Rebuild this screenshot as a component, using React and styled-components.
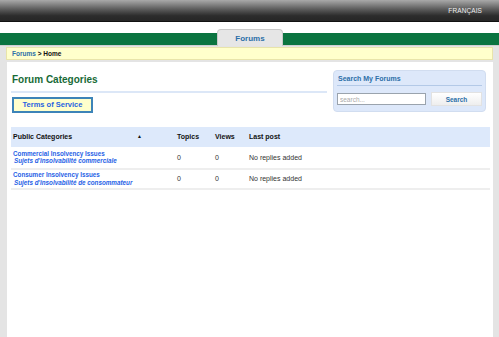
import React from "react";
import styled, { createGlobalStyle } from "styled-components";

const Global = createGlobalStyle`
  *, *::before, *::after {
    box-sizing: border-box;
  }
  html, body {
    margin: 0;
    padding: 0;
    background: #e4e4e4;
    font-family: "Liberation Sans", Arial, sans-serif;
  }
`;

const TopBar = styled.div`
  height: 22px;
  background: linear-gradient(#a9a9a9 0%, #5a5a5a 45%, #2c2c2c 75%, #262626 100%);
  border-bottom: 1px solid #111;
  display: flex;
  align-items: center;
  justify-content: flex-end;
  padding-right: 17px;
`;

const Lang = styled.a`
  color: #f0f0f0;
  font-size: 6.5px;
  letter-spacing: 0.1px;
`;

const Header = styled.div`
  background: #fff;
  padding-top: 11px;
`;

const NavBar = styled.div`
  height: 12px;
  background: #0a7440;
  display: flex;
  justify-content: center;
  align-items: flex-start;
`;

const Tab = styled.div`
  width: 66px;
  height: 17px;
  margin-top: -4px;
  margin-left: 1px;
  background: #e6e6e6;
  border: 1px solid #c9c9c9;
  border-bottom: none;
  border-radius: 4px 4px 0 0;
  color: #2c6fa8;
  font-size: 8px;
  font-weight: bold;
  display: flex;
  align-items: center;
  justify-content: center;
`;

const Main = styled.div`
  padding: 1px 6px 0 6px;
  border-top: 1px solid #d0d0d0;
`;

const Crumbs = styled.div`
  width: 487px;
  height: 13px;
  background: #ffffcc;
  border: 1px solid #e8e4aa;
  font-size: 6.5px;
  font-weight: bold;
  color: #111;
  display: flex;
  align-items: center;
  padding-left: 5px;
`;

const CrumbLink = styled.span`
  color: #2c6fa8;
`;

const Content = styled.div`
  background: #fff;
  margin: 2px 0 0 1px;
  width: 486px;
  height: 275px;
  padding: 8px 3px 0 4px;
`;

const TopRow = styled.div`
  display: flex;
  align-items: flex-start;
`;

const Left = styled.div`
  width: 316px;
  padding-top: 3px;
`;

const Title = styled.h1`
  margin: 1px 0 5px 1px;
  font-size: 10px;
  line-height: 12px;
  color: #186a36;
`;

const Rule = styled.div`
  height: 2px;
  background: #dce7f7;
`;

const TosButton = styled.button`
  margin: 1px 0 0 1px;
  width: 81px;
  height: 16px;
  background: #ffffcc;
  border: 2px solid #3d84b8;
  color: #1f63e0;
  font-family: inherit;
  font-size: 7.5px;
  font-weight: bold;
  padding: 0;
`;

const Sidebar = styled.div`
  width: 153px;
  margin-left: 6px;
  margin-top: 0;
  background: #dde8fa;
  border: 1px solid #d1ddf0;
  border-radius: 4px;
  padding: 3px 3px 5px 3px;
`;

const SideTitle = styled.div`
  font-size: 7px;
  font-weight: bold;
  color: #2c6fa8;
  line-height: 9px;
  padding: 0 0 2px 1px;
  border-bottom: 1px solid #b3c9e7;
`;

const SearchRow = styled.div`
  display: flex;
  align-items: center;
  margin-top: 6px;
  gap: 5px;
`;

const SearchInput = styled.input`
  width: 89px;
  height: 12px;
  border: 1px solid #9aa3ad;
  font-family: inherit;
  font-size: 6.5px;
  padding: 1px 2px;
  color: #888;
  &::placeholder {
    color: #aaa;
  }
`;

const SearchButton = styled.button`
  width: 52px;
  height: 14px;
  background: linear-gradient(#ffffff, #eeeeee);
  border: 1px solid #e2e2e2;
  color: #2c6fa8;
  font-family: inherit;
  font-size: 6.5px;
  font-weight: bold;
  padding: 0;
`;

const Table = styled.table`
  width: 479px;
  margin-top: 14px;
  border-collapse: collapse;
  font-size: 7px;
  color: #222;
`;

const Th = styled.th`
  background: #dde9fb;
  height: 20px;
  padding: 0 0 0 2px;
  text-align: left;
  font-weight: bold;
  color: #111;
  width: ${(p) => p.$w || "auto"};
`;

const Arrow = styled.span`
  float: right;
  margin-right: 33px;
  font-size: 5px;
`;

const Td = styled.td`
  height: ${(p) => p.$h || 20}px;
  padding: 0 0 0 2px;
  border-bottom: 2px solid #eeeeee;
  color: #333;
  vertical-align: middle;
`;

const CatLink = styled.a`
  display: block;
  color: #1f5fe6;
  font-size: 6.3px;
  font-weight: bold;
  line-height: 7.5px;
`;

const CatSub = styled(CatLink)`
  font-style: italic;
  padding-left: 1px;
`;

const rows = [
  {
    en: "Commercial Insolvency Issues",
    fr: "Sujets d'insolvabilité commerciale",
    h: 22,
  },
  {
    en: "Consumer Insolvency Issues",
    fr: "Sujets d'insolvabilité de consommateur",
    h: 20,
  },
];

export default function App() {
  return (
    <>
      <Global />
      <TopBar>
        <Lang>FRANÇAIS</Lang>
      </TopBar>
      <Header>
        <NavBar>
          <Tab>Forums</Tab>
        </NavBar>
      </Header>
      <Main>
        <Crumbs>
          <CrumbLink>Forums</CrumbLink>&nbsp;&gt; Home
        </Crumbs>
        <Content>
          <TopRow>
            <Left>
              <Title>Forum Categories</Title>
              <Rule />
              <TosButton>Terms of Service</TosButton>
            </Left>
            <Sidebar>
              <SideTitle>Search My Forums</SideTitle>
              <SearchRow>
                <SearchInput placeholder="search..." />
                <SearchButton>Search</SearchButton>
              </SearchRow>
            </Sidebar>
          </TopRow>
          <Table>
            <thead>
              <tr>
                <Th $w="164px">
                  Public Categories<Arrow>▲</Arrow>
                </Th>
                <Th $w="38px">Topics</Th>
                <Th $w="34px">Views</Th>
                <Th>Last post</Th>
              </tr>
            </thead>
            <tbody>
              {rows.map((r) => (
                <tr key={r.en}>
                  <Td $h={r.h}>
                    <CatLink>{r.en}</CatLink>
                    <CatSub>{r.fr}</CatSub>
                  </Td>
                  <Td>0</Td>
                  <Td>0</Td>
                  <Td>No replies added</Td>
                </tr>
              ))}
            </tbody>
          </Table>
        </Content>
      </Main>
    </>
  );
}
